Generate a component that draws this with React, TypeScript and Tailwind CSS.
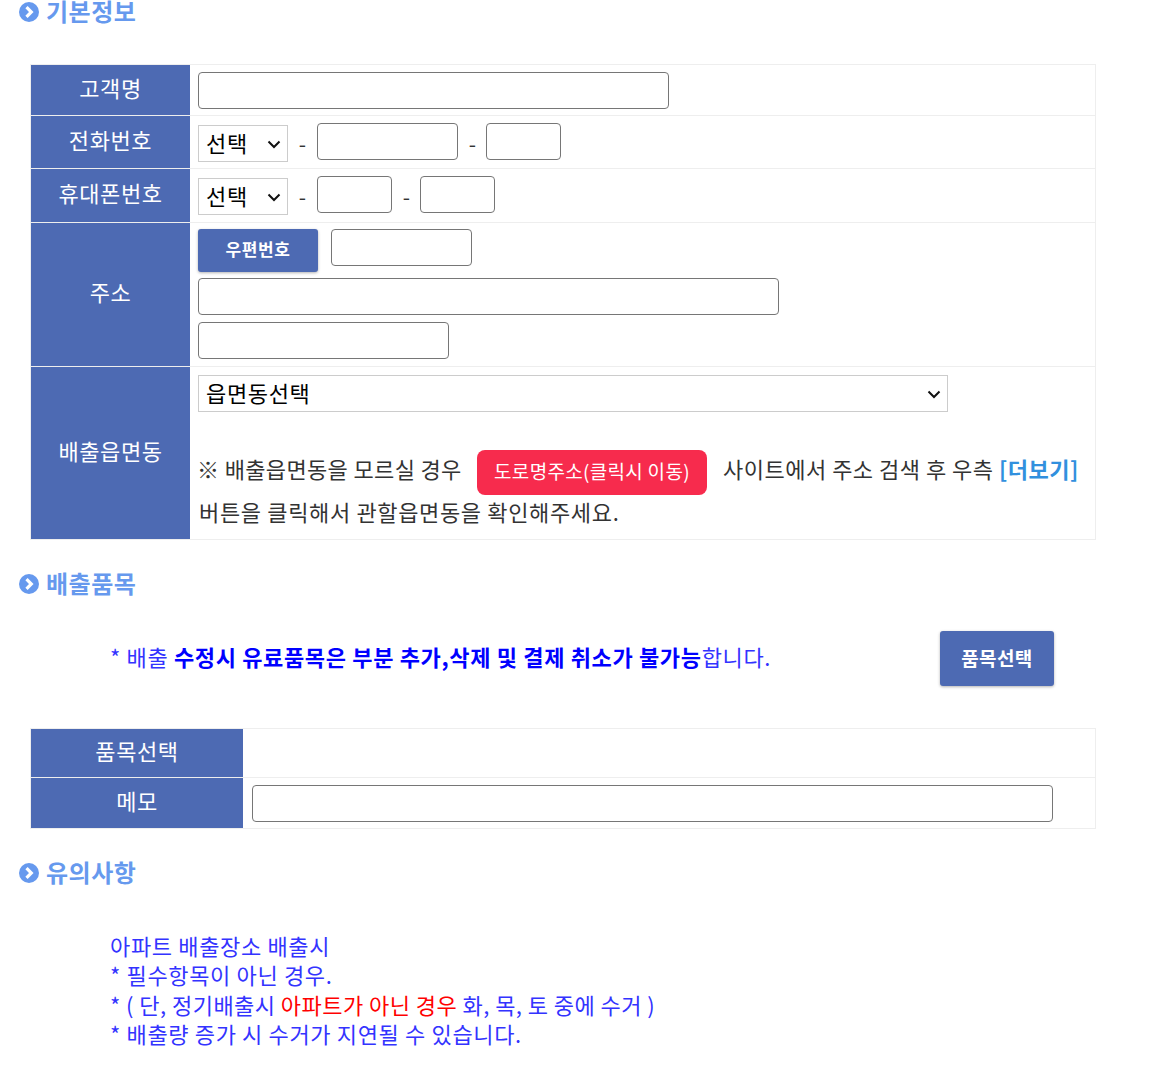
const FONT = "font-['Noto_Sans_CJK_KR','Noto_Sans',sans-serif]";

function Heading({ children, className }: { children: string; className: string }) {
  return (
    <div className={`flex items-center pl-[19px] ${className}`}>
      <svg width="20" height="20" viewBox="0 0 20 20" className="mr-[7px] shrink-0 mt-[2px]">
        <circle cx="10" cy="10" r="10" fill="#6699ee" />
        <path d="M7.5 5.2 L12.3 10 L7.5 14.8" fill="none" stroke="#fff" strokeWidth="3.2" />
      </svg>
      <span className="text-[24px] leading-[20px] font-bold text-[#6699ee] tracking-[0.5px] -mt-[1px]">{children}</span>
    </div>
  );
}

function Select({ label, className }: { label: string; className: string }) {
  return (
    <div className={`h-[37px] border border-[#cccccc] bg-white flex items-center justify-between pl-[7px] pr-[5px] text-[22px] tracking-[0.65px] text-black ${className}`}>
      <span className="leading-none -mt-[4px]">{label}</span>
      <svg width="16" height="16" viewBox="0 0 16 16"><path d="M2.5 5.5 L8 11 L13.5 5.5" fill="none" stroke="#111" strokeWidth="2" /></svg>
    </div>
  );
}

function Field({ className }: { className: string }) {
  return <input className={`block h-[37px] border border-[#767676] rounded-[4px] bg-white ${className}`} />;
}

function Dash() {
  return <span className="mt-[2px] h-[37px] flex items-center justify-center text-[21px] text-[#333] w-[11px] leading-none">-</span>;
}

function Row({ label, labelWidth, className, children, cellClass }: { label: string; labelWidth: string; className: string; children?: React.ReactNode; cellClass?: string }) {
  return (
    <div className={`flex border-b border-[#eeeeee] ${className}`}>
      <div className={`${labelWidth} shrink-0 bg-[#4d6ab3] text-white text-[22px] tracking-[0.6px] flex items-center justify-center pb-[6px]`}>{label}</div>
      <div className={`flex-1 ${cellClass ?? "px-[8px]"}`}>{children}</div>
    </div>
  );
}

export default function App() {
  return (
    <div className={`${FONT} w-[1170px] h-[1084px] overflow-hidden bg-white text-[#333]`}>
      <div className="pt-[1px]"><Heading className="-mt-[4px] h-[28px]">기본정보</Heading></div>
      <div className="ml-[30px] mt-[39px] w-[1066px] border border-b-0 border-[#eeeeee]">
        <Row label="고객명" labelWidth="w-[159px]" className="h-[51px]" cellClass="px-[8px] flex items-center">
          <Field className="w-[471px]" />
        </Row>
        <Row label="전화번호" labelWidth="w-[159px]" className="h-[53px]" cellClass="px-[8px] flex items-start gap-[9px] pt-[7px]">
          <Select label="선택" className="w-[90px] mt-[2px]" />
          <Dash />
          <Field className="w-[141px]" />
          <Dash />
          <Field className="w-[75px] -ml-[1px]" />
        </Row>
        <Row label="휴대폰번호" labelWidth="w-[159px]" className="h-[54px]" cellClass="px-[8px] flex items-start gap-[9px] pt-[7px]">
          <Select label="선택" className="w-[90px] mt-[2px]" />
          <Dash />
          <Field className="w-[75px]" />
          <Dash />
          <Field className="w-[75px] -ml-[1px]" />
        </Row>
        <Row label="주소" labelWidth="w-[159px]" className="h-[144px]" cellClass="px-[8px] pt-[6px]">
          <div className="flex items-start gap-[13px]">
            <button className="w-[120px] h-[43px] bg-[#4d6ab3] text-white text-[17px] tracking-[0.6px] font-bold rounded-[3px] shadow-[0_1px_3px_rgba(0,0,0,0.3)] pb-[4px]">우편번호</button>
            <Field className="w-[141px]" />
          </div>
          <Field className="w-[581px] mt-[6px]" />
          <Field className="w-[251px] mt-[7px]" />
        </Row>
        <Row label="배출읍면동" labelWidth="w-[159px]" className="h-[173px]" cellClass="px-[8px] pt-[8px] text-[22px] tracking-[0.65px]">
          <Select label="읍면동선택" className="w-[750px]" />
          <div className="mt-[38px] flex items-center h-[45px] whitespace-nowrap">
            <span className="w-[279px] -mt-[8px] -ml-[1px] tracking-[0.35px]">※ 배출읍면동을 모르실 경우</span>
            <span className="ml-[1px] w-[230px] h-[45px] rounded-[8px] bg-[#f72b4d] text-white text-[19px] tracking-[0.3px] flex items-center justify-center pb-[2px]">도로명주소(클릭시 이동)</span>
            <span className="ml-[16px] -mt-[8px] tracking-[0.5px]">사이트에서 주소 검색 후 우측 <b className="text-[#3190de]">[더보기]</b></span>
          </div>
          <div className="pl-[1px] leading-[32px] whitespace-nowrap">버튼을 클릭해서 관할읍면동을 확인해주세요.</div>
        </Row>
      </div>
      <Heading className="mt-[29px] h-[28px]">배출품목</Heading>
      <div className="flex items-center h-[55px] mt-[34px] pl-[110px] text-[22px] tracking-[0.65px] text-[#3333ff] whitespace-nowrap">
        <span className="w-[830px] -mt-[4px]">* 배출 <b className="text-[#0000ff]">수정시 유료품목은 부분 추가,삭제 및 결제 취소가 불가능</b>합니다.</span>
        <button className="w-[114px] h-[55px] bg-[#4d6ab3] text-white text-[19px] tracking-[0.4px] font-bold rounded-[3px] shadow-[0_1px_3px_rgba(0,0,0,0.3)]">품목선택</button>
      </div>
      <div className="ml-[30px] mt-[42px] w-[1066px] border border-b-0 border-[#eeeeee]">
        <Row label="품목선택" labelWidth="w-[212px]" className="h-[49px]" />
        <Row label="메모" labelWidth="w-[212px]" className="h-[51px]" cellClass="pl-[9px] flex items-center">
          <Field className="w-[801px]" />
        </Row>
      </div>
      <Heading className="mt-[29px] h-[28px]">유의사항</Heading>
      <div className="mt-[45px] pl-[110px] text-[22px] tracking-[0.65px] leading-[29.3px] text-[#3333ff] whitespace-nowrap">
        <div>아파트 배출장소 배출시</div>
        <div>* 필수항목이 아닌 경우.</div>
        <div className="tracking-[0.45px]">* ( 단, 정기배출시 <span className="text-[#ff0000]">아파트가 아닌 경우</span> 화, 목, 토 중에 수거 )</div>
        <div>* 배출량 증가 시 수거가 지연될 수 있습니다.</div>
      </div>
    </div>
  );
}
